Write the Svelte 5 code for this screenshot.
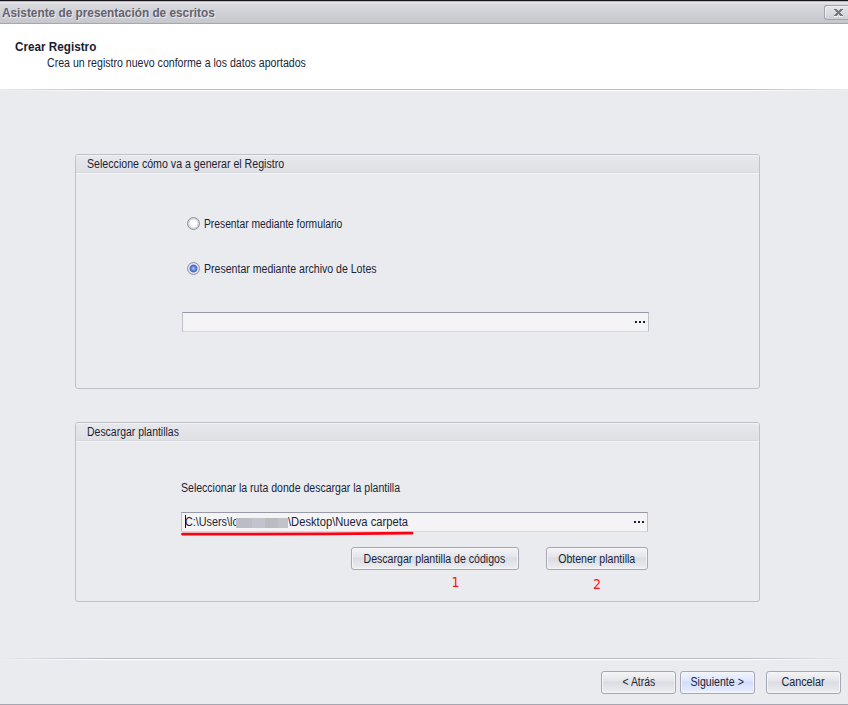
<script>
  let mode = $state('lotes');
  const options = [
    { id: 'formulario', label: 'Presentar mediante formulario', cls: 'o1' },
    { id: 'lotes', label: 'Presentar mediante archivo de Lotes', cls: 'o2' }
  ];
</script>

<div class="window">
  <div class="titlebar">
    <span class="title">Asistente de presentación de escritos</span>
    <button class="close" aria-label="Cerrar">
      <svg width="9" height="8" viewBox="0 0 9 8" shape-rendering="crispEdges">
        <path d="M0 7h4v1H0zM5 7h4v1H5z" fill="#f4f4f6" />
        <path d="M0 0h3v1H0zM6 0h3v1H6zM1 1h7v1H1zM2 2h5v1H2zM3 3h3v1H3zM2 4h5v1H2zM1 5h7v1H1zM0 6h3v1H0zM6 6h3v1H6z" fill="#747682" />
        <path d="M4 1h1v1H4zM4 5h1v1H4z" fill="#d3d4d9" />
      </svg>
    </button>
  </div>

  <header>
    <h1><span class="t0">Crear Registro</span></h1>
    <p><span class="sub">Crea un registro nuevo conforme a los datos aportados</span></p>
  </header>
  <div class="rule"></div>

  <main>
    <section class="group first">
      <h2><span class="t1">Seleccione cómo va a generar el Registro</span></h2>
      <div class="options">
        {#each options as o}
          <label>
            <input type="radio" name="modo" value={o.id} bind:group={mode} />
            <span class="dot" class:on={mode === o.id}></span>
            <span class={o.cls}>{o.label}</span>
          </label>
        {/each}
      </div>
      <div class="field">
        <span class="value"></span>
        <span class="dots"><i></i><i></i><i></i></span>
      </div>
    </section>

    <section class="group second">
      <h2><span class="t2">Descargar plantillas</span></h2>
      <p class="path-label"><span class="t3">Seleccionar la ruta donde descargar la plantilla</span></p>
      <div class="field path">
        <span class="value"><span class="caret"></span><span class="p1">C:\Users\lo</span><span class="redacted"></span><span class="p2">\Desktop\Nueva carpeta</span></span>
        <span class="dots"><i></i><i></i><i></i></span>
        <svg class="mark" width="233" height="5" viewBox="0 0 233 5">
          <path d="M1.5 3.2H59L147 2.8L231 2.2" fill="none" stroke="#fe0013" stroke-width="2.8" stroke-linecap="round" />
        </svg>
      </div>
      <div class="actions">
        <div class="action">
          <button class="btn wide"><span class="b1">Descargar plantilla de códigos</span></button>
          <span class="num one">1</span>
        </div>
        <div class="action">
          <button class="btn mid"><span class="b2">Obtener plantilla</span></button>
          <span class="num two">2</span>
        </div>
      </div>
    </section>
  </main>

  <div class="rule bottom"></div>
  <footer>
    <button class="btn"><span class="f1">&lt; Atrás</span></button>
    <button class="btn primary"><span class="f2">Siguiente &gt;</span></button>
    <button class="btn cancel"><span class="f3">Cancelar</span></button>
  </footer>
</div>

<style>
  :global(body) { margin: 0; overflow: hidden; }
  .window, .window * { box-sizing: border-box; }
  .window {
    width: 848px; height: 705px; display: flex; flex-direction: column;
    background: #eaebef; color: #201f35; border-bottom: 1px solid #a5a6b1;
    font: 12px/14px "Liberation Sans", Arial, sans-serif; white-space: nowrap;
  }
  h1, h2, p { margin: 0; font-size: 12px; font-weight: normal; }
  button { font: inherit; color: inherit; padding: 0; }

  /* condensed lettering */
  .title, .t0, .t1, .t2, .t3, .sub, .o1, .o2, .p1, .p2 { display: inline-block; transform-origin: 0 50%; }
  .b1, .b2, .f1, .f2, .f3 { display: inline-block; transform-origin: 50% 50%; }
  .title { transform: scaleX(.985); }
  .t0 { transform: scaleX(.975); }
  .t1 { transform: scaleX(.885); }
  .t2 { transform: scaleX(.872); }
  .t3 { transform: scaleX(.878); }
  .sub { transform: scaleX(.882); }
  .o1 { transform: scaleX(.857); }
  .o2 { transform: scaleX(.88); }
  .p1 { transform: scaleX(.9); }
  .p2 { transform: scaleX(.932); }
  .b1, .b2, .f2 { transform: scaleX(.882); }
  .f1 { transform: scaleX(.865); }
  .f3 { transform: scaleX(.9); }

  .titlebar {
    height: 24px; flex: none; display: flex; justify-content: space-between;
    border-top: 1px solid #151218; border-bottom: 1px solid #a5a6b0;
    background: linear-gradient(#b9b9c0 0 1px, #e6e6ea 1px 2px, #d9dade 3px, #c6c7cd);
  }
  .title { padding: 5px 0 0 2px; font-weight: bold; color: #62626f; text-shadow: 1px 1px 0 #e9e9ed; }
  .close {
    width: 24px; height: 15px; margin-top: 4px; padding: 3px 0 0 9px; display: flex; align-items: flex-start;
    border: 1px solid #a3a4ae; border-right: 0; border-radius: 3px 0 0 3px;
    background: linear-gradient(#e5e5e9, #cfd0d6); box-shadow: inset 1px 1px 0 #eeeef1;
  }
  .close svg { flex: none; display: block; }
  header { height: 65px; flex: none; background: #fff; padding: 16px 0 0 15px; }
  h1 { font-weight: bold; height: 16px; color: #1b1a30; }
  header p { padding-left: 32px; }
  .rule {
    height: 2px; flex: none;
    background:
      linear-gradient(90deg, #eaebef, #b9bac3 12%, #b9bac3 88%, #eaebef) 0 0 / 100% 1px no-repeat,
      linear-gradient(90deg, #eaebef, #fff 12%, #fff 88%, #eaebef) 0 1px / 100% 1px no-repeat;
  }
  main { height: 567px; flex: none; padding: 63px 88px 0 75px; }
  .group { border: 1px solid #bfc0c8; border-radius: 3px; width: 685px; }
  .first { height: 235px; margin-bottom: 33px; }
  .second { height: 180px; }
  h2 {
    height: 18px; padding: 2px 0 0 11px; border-radius: 2px 2px 0 0;
    background: linear-gradient(#e7e8ec, #dfe0e4);
    box-shadow: inset 0 1px 0 #f1f1f4, inset 0 -1px 0 #d8d9de, 0 1px 0 #f4f4f6;
  }
  .options { display: flex; flex-direction: column; gap: 31px; padding: 44px 0 0 111px; }
  label { display: flex; align-items: center; height: 14px; }
  label input { display: none; }
  .dot {
    width: 13px; height: 13px; margin: 0 4px 2px 0; border-radius: 50%; border: 1px solid #9192a0;
    background: radial-gradient(circle, #fff 0 3.6px, #cccdd4 4.6px, #e0e1e7 6px);
  }
  .dot.on { background: radial-gradient(circle, #a9c3ff 0, #7598ec 1.6px, #3f5fb6 3.4px, #e6e9f2 4.4px, #d2d3dc 6px); }
  .field {
    width: 467px; height: 20px; margin: 36px 0 0 106px; display: flex; justify-content: space-between; align-items: center;
    background: #f4f4f7; border: 1px solid #bfc0ca; border-top-color: #999aa8; border-bottom-color: #d7d8de; position: relative;
  }
  .dots { display: flex; gap: 2px; padding-right: 3px; }
  .dots i { width: 2px; height: 2px; background: #201e32; }
  .path-label { padding: 40px 0 0 105px; }
  .path { margin: 17px 0 0 105px; }
  .value { display: flex; align-items: center; padding-left: 3px; }
  .caret { width: 1px; height: 13px; margin-top: -2px; background: #111; margin-right: -1px; }
  .p1 { width: 51px; }
  .redacted { position: relative; width: 52px; height: 10px; margin-top: 1px; background: linear-gradient(90deg, #bcbcc4 0 30%, #c4c3cd 30% 55%, #bbbbc2 55% 80%, #c2c2ca 80%); }
  .mark { position: absolute; left: -1px; top: 18px; }
  .actions { display: flex; gap: 27px; padding: 15px 0 0 275px; }
  .action { display: flex; flex-direction: column; align-items: center; }
  .btn {
    width: 75px; height: 23px; border: 1px solid #a6a7b3; border-radius: 3px; text-align: center; padding-bottom: 1px;
    background: linear-gradient(#f5f5f8, #e4e5ea 42%, #dcdde3 50%, #e8e9ed 85%, #f0f0f3);
    box-shadow: inset 0 0 0 1px #f5f5f8;
  }
  .wide { width: 168px; padding: 1px 1px 0 0; }
  .mid { width: 102px; padding: 1px 0 0; }
  .num { font: 14px/16px "DejaVu Sans Condensed", "DejaVu Sans", sans-serif; color: #ff1010; }
  .one { padding: 4px 0 0 41px; }
  .two { padding-top: 6px; }
  footer { display: flex; justify-content: flex-end; padding: 11px 7px 0 0; gap: 4px; }
  .primary { background: linear-gradient(#f1f4ff, #dfe6fc 42%, #d3ddfb 50%, #e3eafd 85%, #f0f4ff); }
  .cancel { margin-left: 7px; }
</style>
